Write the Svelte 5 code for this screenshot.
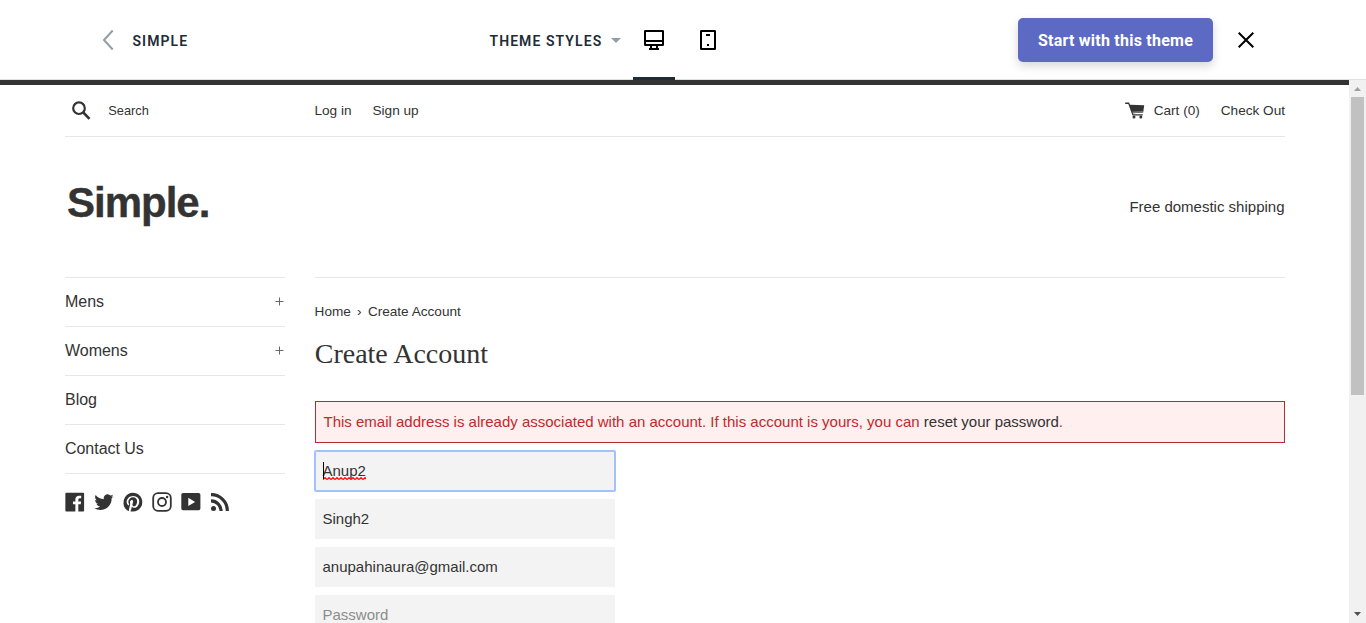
<script>
  const nav = [
    { label: 'Mens', more: true },
    { label: 'Womens', more: true },
    { label: 'Blog', more: false },
    { label: 'Contact Us', more: false }
  ];
</script>

<div class="page">
  <header class="bar">
    <div class="back">
      <svg width="12" height="22" viewBox="0 0 12 22"><path d="M10.700 1.500 2 11l8.700 9.500" fill="none" stroke="#919eab" stroke-width="2" /></svg>
      <span class="caps simple">SIMPLE</span>
    </div>
    <div class="styles">
      <span class="caps">THEME STYLES</span>
      <svg width="10" height="5" viewBox="0 0 10 5"><path d="M0 0h10L5 5z" fill="#919eab" /></svg>
    </div>
    <div class="device active">
      <svg width="20" height="20" viewBox="0 0 20 20" fill="none" stroke="#000" stroke-width="2"><rect x="1" y="1" width="18" height="14" rx=".3" /><path d="M1 11h18M7 15v4M13 15v4M5 19h10" /></svg>
    </div>
    <div class="device">
      <svg width="16" height="20" viewBox="0 0 16 20"><rect x="1" y="1" width="14" height="18" rx=".3" fill="none" stroke="#000" stroke-width="2" /><path d="M6 4h4v2H6zM7 14h2v2H7z" /></svg>
    </div>
    <button class="start"><span>Start with this theme</span></button>
    <svg class="close" width="16" height="16" viewBox="0 0 16 16"><path d="m.7.7 14.600 14.600M15.300.7.7 15.300" stroke="#000" stroke-width="2" /></svg>
  </header>

  <div class="frame">
    <div class="shop">
      <div class="top">
        <svg class="search" width="19" height="19" viewBox="0 0 19 19" fill="none" stroke="#333"><circle cx="7" cy="7.200" r="5.800" stroke-width="2.200" /><path d="m11.300 11.500 6.200 6.300" stroke-width="2.600" /></svg>
        <span class="t-search">Search</span>
        <span class="t-login">Log in</span>
        <span class="t-signup">Sign up</span>
        <svg class="cart" width="20" height="17" viewBox="0 0 20 17"><path d="M.2.5h3.900l.9 2.300 14.200.5-1 7.200-10.300.7.500 1.100h9.300v1.100H7.500L3.300 2H.2z" fill="#333" /><path d="m7.300 9.500 10.800-.5-.2 1.600-10 .6z" fill="#777" /><circle cx="9" cy="15" r="1.500" fill="#333" /><circle cx="15.800" cy="15" r="1.500" fill="#333" /></svg>
        <span class="t-cart">Cart (0)</span>
        <span class="t-check">Check Out</span>
      </div>

      <div class="brand">
        <span class="logo">Simple.</span>
        <span class="ship">Free domestic shipping</span>
      </div>

      <div class="cols">
        <aside>
          <ul>
            {#each nav as item}
              <li><span>{item.label}</span>{#if item.more}<svg class="plus" width="9" height="9" viewBox="0 0 9 9"><path d="M.5 4.500h8M4.500.5v8" stroke="#666" /></svg>{/if}</li>
            {/each}
          </ul>
          <div class="social">
            <svg viewBox="0 0 20 20"><path d="M18.050.811q.439 0 .744.305t.305.744v16.637q0 .439-.305.744t-.744.305h-4.732v-7.221h2.415l.342-2.854h-2.757v-1.830q0-.659.293-1t1.073-.342h1.488V3.762q-.976-.098-2.171-.098-1.634 0-2.635.964t-1 2.720V9.470H7.951v2.854h2.415v7.221H1.413q-.439 0-.744-.305t-.305-.744V1.859q0-.439.305-.744T1.413.810H18.050z" /></svg>
            <svg viewBox="0 0 20 20"><path d="M19.551 4.208q-.815 1.202-1.956 2.038 0 .082.020.255t.020.255q0 1.589-.469 3.179t-1.426 3.036-2.272 2.567-3.158 1.793-3.963.672q-3.301 0-6.031-1.773.571.041.937.041 2.751 0 4.911-1.671-1.284-.020-2.292-.784T2.456 11.850q.346.082.754.082.550 0 1.039-.163-1.365-.285-2.262-1.365T1.090 7.918v-.041q.774.408 1.773.448-.795-.530-1.263-1.396t-.469-1.864q0-1.019.509-1.997 1.487 1.854 3.596 2.924T9.810 7.184q-.143-.509-.143-.897 0-1.630 1.161-2.781t2.832-1.151q.815 0 1.569.326t1.284.917q1.345-.265 2.506-.958-.428 1.386-1.732 2.180 1.243-.163 2.262-.611z" /></svg>
            <svg viewBox="0 0 20 20"><path d="M9.958.811q1.903 0 3.635.744t2.988 2 2 2.988.744 3.635q0 2.537-1.256 4.696t-3.415 3.415-4.696 1.256q-1.390 0-2.659-.366.707-1.147.951-2.025l.659-2.561q.244.463.903.817t1.390.354q1.464 0 2.622-.842t1.793-2.305.634-3.293q0-2.171-1.671-3.769t-4.257-1.598q-1.586 0-2.903.537T5.298 5.897 4.066 7.775t-.427 2.037q0 1.268.476 2.220t1.427 1.342q.146.073.244.037t.146-.207q.171-.683.195-.780.073-.317-.146-.561-.659-.780-.659-1.878 0-1.927 1.342-3.281t3.464-1.354q1.878 0 2.939 1.037t1.061 2.671q0 2.122-.866 3.622t-2.232 1.500q-.780 0-1.244-.549t-.317-1.305q.098-.439.268-1.049t.280-1.073.110-.793q0-.634-.354-1.049t-.963-.415q-.780 0-1.317.720t-.537 1.793q0 .902.317 1.537l-1.268 5.366q-.171.732-.122 1.903-2.512-1.098-4.098-3.415T.590 10.177q0-2.537 1.256-4.696t3.415-3.415T9.958.811z" /></svg>
            <svg viewBox="0 0 20 20"><g fill="none" stroke="#333" stroke-width="1.800"><rect x="1.200" y="1.200" width="17.600" height="17.600" rx="4.800" /><circle cx="10" cy="10" r="4" /></g><circle cx="15.100" cy="5" r="1.200" /></svg>
            <svg viewBox="0 0 20 20"><path fill-rule="evenodd" d="M2 1h15.700q1.700 0 1.700 1.700v13.900q0 1.700-1.700 1.700H2Q.3 18.300.3 16.600V2.700Q.3 1 2 1zM7.300 5.800v8.200l6.800-4.100z" /></svg>
            <svg viewBox="0 0 20 20"><circle cx="3.500" cy="16.500" r="2.500" /><path fill="none" stroke="#333" stroke-width="3.200" d="M1 8.800a10 10 0 0 1 10 10.200M1 2.700a16 16 0 0 1 16.300 16.300" /></svg>
          </div>
        </aside>

        <main>
          <div class="crumbs"><span>Home</span><span class="sep">›</span><span>Create Account</span></div>
          <h1>Create Account</h1>
          <div class="error">This email address is already associated with an account. If this account is yours, you can <a>reset your password</a>.</div>
          <div class="field focus"><span class="value">Anup2<svg class="squiggle" width="43" height="3" viewBox="0 0 43 3"><defs><pattern id="wave" width="4" height="3" patternUnits="userSpaceOnUse"><path d="M0 2.500 2 .7l2 1.800" fill="none" stroke="#f00" stroke-width="1.300" /></pattern></defs><rect width="43" height="3" fill="url(#wave)" /></svg><i class="caret"></i></span></div>
          <div class="field">Singh2</div>
          <div class="field">anupahinaura@gmail.com</div>
          <div class="field hint">Password</div>
        </main>
      </div>
    </div>
    <div class="scroll">
      <svg width="7" height="4" viewBox="0 0 7 4"><path d="M0 4h7L3.500 0z" fill="#a0a0a0" /></svg>
      <div class="thumb"></div>
      <svg width="7" height="4" viewBox="0 0 7 4"><path d="M0 0h7L3.500 4z" fill="#505050" /></svg>
    </div>
  </div>
</div>

<style>
  .page { width: 1366px; height: 623px; overflow: hidden; display: flex; flex-direction: column; background: #fff; color: #333; font-family: "Liberation Sans", Arial, sans-serif; }
  .page * { box-sizing: border-box; }
  svg { display: block; flex: none; }
  span, .error, h1 { white-space: nowrap; }

  .bar { flex: none; height: 80px; border-bottom: 1px solid #dfdfdf; display: flex; align-items: center; padding-top: 1px; }
  .back { display: flex; align-items: center; gap: 18.500px; width: 387.500px; margin-left: 102px; }
  .caps { font: 600 14px/20px Roboto, sans-serif; letter-spacing: 1.070px; color: #212b36; padding-top: 1px; }
  .styles { display: flex; align-items: center; gap: 8.500px; width: 143.500px; }
  .device { width: 42px; height: 79px; margin-right: 12px; display: flex; align-items: center; justify-content: center; border-bottom: 3px solid transparent; border-top: 3px solid transparent; }
  .device.active { border-bottom-color: #212b36; }
  .start { width: 195px; height: 44px; margin-left: 277px; border: 0; border-radius: 5px; background: #5c6ac4; color: #fff; font: 700 16px/24px Roboto, sans-serif; letter-spacing: .24px; box-shadow: 0 4px 10px rgba(0, 0, 0, .16); padding: 1px 0 0; }
  .close { margin-left: 25px; }

  .frame { flex: 1; min-height: 0; display: flex; }
  .shop { width: 1349px; height: 543px; overflow: hidden; border-top: 5px solid #333; padding: 0 64px 0 65px; }
  .top { height: 52px; border-bottom: 1px solid #e6e6e6; display: flex; align-items: center; font-size: 13.6px; width: 1220px; }
  .search { margin-left: 7px; }
  .t-search { margin-left: 17.300px; width: 206.200px; font-size: 12.800px; }
  .t-login { width: 58px; }
  .cart { margin-left: auto; margin-right: 9px; }
  .t-cart { margin-right: 21px; }

  .brand { width: 1219.500px; height: 140px; display: flex; align-items: center; justify-content: space-between; padding-bottom: 2px; }
  .logo { font-size: 42px; font-weight: 700; line-height: 48px; padding: 0 0 6px 2px; letter-spacing: -1px; -webkit-text-stroke: .4px #333; }
  .ship { font-size: 15px; }

  .cols { display: grid; grid-template-columns: 220px 970px; gap: 30px; align-items: start; }
  ul { margin: 0; padding: 0; list-style: none; border-top: 1px solid #e6e6e6; }
  li { height: 49px; border-bottom: 1px solid #e6e6e6; display: flex; align-items: center; justify-content: space-between; font-size: 16px; letter-spacing: -.04px; }
  .plus { margin: 0 1px 2px 0; }
  .social { display: flex; gap: 9px; padding-top: 18px; }
  .social svg { width: 20px; height: 20px; fill: #333; }

  main { border-top: 1px solid #e6e6e6; padding-top: 24px; }
  .crumbs { display: flex; height: 18px; align-items: center; font-size: 13.6px; margin-left: -.4px; }
  .sep { width: 17px; text-align: center; }
  h1 { margin: 16px 0 0 -.3px; height: 36px; font: 400 28px/36px "Liberation Serif", serif; }
  .error { margin-top: 29px; height: 42px; border: 1px solid #b12d2e; background: #ffefef; color: #c1292c; font-size: 15px; line-height: 40px; padding-left: 7.500px; }
  .error a { color: #333; }
  .field { width: 300px; height: 40px; margin-top: 8px; background: #f3f3f3; padding-left: 7.500px; font-size: 15px; line-height: 40px; }
  .focus { box-shadow: inset 0 0 0 1px #a3c2fb, 0 0 0 1px #a3c2fb; border-radius: 1px; }
  .value { position: relative; display: inline-block; height: 40px; }
  .squiggle { position: absolute; left: .5px; top: 26px; }
  .caret { position: absolute; left: .5px; top: 11px; width: 1px; height: 17px; background: #000; }
  .hint { color: #8c8c8c; }

  .scroll { width: 17px; background: #f1f1f1; display: flex; flex-direction: column; align-items: center; justify-content: space-between; padding: 7px 0; }
  .thumb { width: 13px; height: 298px; background: #c1c1c1; margin-top: 6px; margin-bottom: auto; }
</style>
